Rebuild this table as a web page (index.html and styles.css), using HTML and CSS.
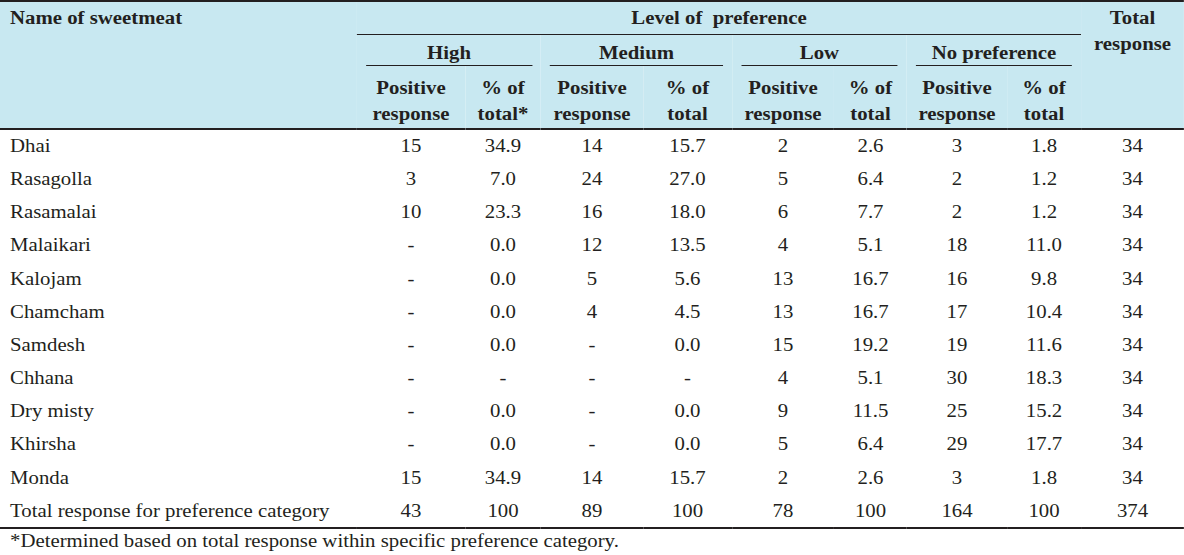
FILE: index.html
```html
<!DOCTYPE html>
<html lang="en">
<head>
<meta charset="utf-8">
<title>Sweetmeat preference</title>
<link rel="stylesheet" href="styles.css">
</head>
<body>
<div class="sheet">
<table class="data">
  <colgroup>
    <col class="c-name">
    <col class="c-hp"><col class="c-hq">
    <col class="c-mp"><col class="c-mq">
    <col class="c-lp"><col class="c-lq">
    <col class="c-np"><col class="c-nq">
    <col class="c-tot">
  </colgroup>
  <thead>
    <tr class="r1">
      <th class="h-name" rowspan="3">Name of sweetmeat</th>
      <th class="h-level" colspan="8"><div class="rule-top">Level of&nbsp; preference</div></th>
      <th class="h-total" rowspan="3">Total<br>response</th>
    </tr>
    <tr class="r2">
      <th class="h-grp" colspan="2"><div class="rule-grp">High</div></th>
      <th class="h-grp" colspan="2"><div class="rule-grp">Medium</div></th>
      <th class="h-grp" colspan="2"><div class="rule-grp">Low</div></th>
      <th class="h-grp" colspan="2"><div class="rule-grp">No preference</div></th>
    </tr>
    <tr class="r3">
      <th class="h-sub">Positive<br>response</th><th class="h-sub">% of<br>total*</th>
      <th class="h-sub">Positive<br>response</th><th class="h-sub">% of<br>total</th>
      <th class="h-sub">Positive<br>response</th><th class="h-sub">% of<br>total</th>
      <th class="h-sub">Positive<br>response</th><th class="h-sub">% of<br>total</th>
    </tr>
  </thead>
  <tbody>
    <tr><td class="nm">Dhai</td><td>15</td><td>34.9</td><td>14</td><td>15.7</td><td>2</td><td>2.6</td><td>3</td><td>1.8</td><td>34</td></tr>
    <tr><td class="nm">Rasagolla</td><td>3</td><td>7.0</td><td>24</td><td>27.0</td><td>5</td><td>6.4</td><td>2</td><td>1.2</td><td>34</td></tr>
    <tr><td class="nm">Rasamalai</td><td>10</td><td>23.3</td><td>16</td><td>18.0</td><td>6</td><td>7.7</td><td>2</td><td>1.2</td><td>34</td></tr>
    <tr><td class="nm">Malaikari</td><td>-</td><td>0.0</td><td>12</td><td>13.5</td><td>4</td><td>5.1</td><td>18</td><td>11.0</td><td>34</td></tr>
    <tr><td class="nm">Kalojam</td><td>-</td><td>0.0</td><td>5</td><td>5.6</td><td>13</td><td>16.7</td><td>16</td><td>9.8</td><td>34</td></tr>
    <tr><td class="nm">Chamcham</td><td>-</td><td>0.0</td><td>4</td><td>4.5</td><td>13</td><td>16.7</td><td>17</td><td>10.4</td><td>34</td></tr>
    <tr><td class="nm">Samdesh</td><td>-</td><td>0.0</td><td>-</td><td>0.0</td><td>15</td><td>19.2</td><td>19</td><td>11.6</td><td>34</td></tr>
    <tr><td class="nm">Chhana</td><td>-</td><td>-</td><td>-</td><td>-</td><td>4</td><td>5.1</td><td>30</td><td>18.3</td><td>34</td></tr>
    <tr><td class="nm">Dry misty</td><td>-</td><td>0.0</td><td>-</td><td>0.0</td><td>9</td><td>11.5</td><td>25</td><td>15.2</td><td>34</td></tr>
    <tr><td class="nm">Khirsha</td><td>-</td><td>0.0</td><td>-</td><td>0.0</td><td>5</td><td>6.4</td><td>29</td><td>17.7</td><td>34</td></tr>
    <tr><td class="nm">Monda</td><td>15</td><td>34.9</td><td>14</td><td>15.7</td><td>2</td><td>2.6</td><td>3</td><td>1.8</td><td>34</td></tr>
    <tr class="total-row"><td class="nm">Total response for preference category</td><td>43</td><td>100</td><td>89</td><td>100</td><td>78</td><td>100</td><td>164</td><td>100</td><td>374</td></tr>
  </tbody>
</table>
<p class="footnote">*Determined based on total response within specific preference category.</p>
</div>
</body>
</html>
```

FILE: styles.css
```css
* { box-sizing: border-box; }

body {
  margin: 0;
  background: #ffffff;
  color: #231f20;
  font-family: "Liberation Serif", "Times New Roman", serif;
  font-size: 18px;
}

/* the printed table is set in a horizontally widened Times face */
.sheet {
  width: 1025.1px;
  transform: scaleX(1.155);
  transform-origin: 0 0;
}

.data {
  width: 1025.1px;
  table-layout: fixed;
  border-collapse: separate;
  border-spacing: 0;
  border-top: 2px solid #231f20;
}

.c-name { width: 309.1px; }
.c-hp { width: 93.5px; }
.c-hq { width: 65.8px; }
.c-mp { width: 88.3px; }
.c-mq { width: 77.1px; }
.c-lp { width: 88.3px; }
.c-lq { width: 63.2px; }
.c-np { width: 86.6px; }
.c-nq { width: 64.1px; }
.c-tot { width: 89.1px; }

thead th {
  background: #c8e8f1;
  font-weight: bold;
  line-height: 26px;
  padding: 0;
  vertical-align: top;
  text-align: center;
  white-space: nowrap;
}

.h-name {
  text-align: left;
  padding: 3px 0 0 8.7px;
  border-bottom: 2px solid #231f20;
}

.h-total {
  padding-top: 3px;
  border-bottom: 2px solid #231f20;
}

.h-level {
  padding-top: 3px;
}

.rule-top {
  padding-bottom: 3px;
  border-bottom: 1px solid #231f20;
}

.h-grp {
  padding-top: 6px;
}

.rule-grp {
  line-height: 24px;
  margin: 0 7.8px;
  border-bottom: 1px solid #231f20;
}

.h-sub {
  padding: 9px 0 1px;
  border-bottom: 2px solid #231f20;
}

tbody td {
  padding: 0;
  line-height: 33.15px;
  text-align: center;
  white-space: nowrap;
}

tbody td.nm {
  text-align: left;
  padding-left: 8.7px;
}

tbody tr.total-row td {
  line-height: 32px;
  border-bottom: 2px solid #231f20;
}

.footnote {
  margin: 0;
  padding: 2px 0 0 8.7px;
  line-height: 20px;
}
```
